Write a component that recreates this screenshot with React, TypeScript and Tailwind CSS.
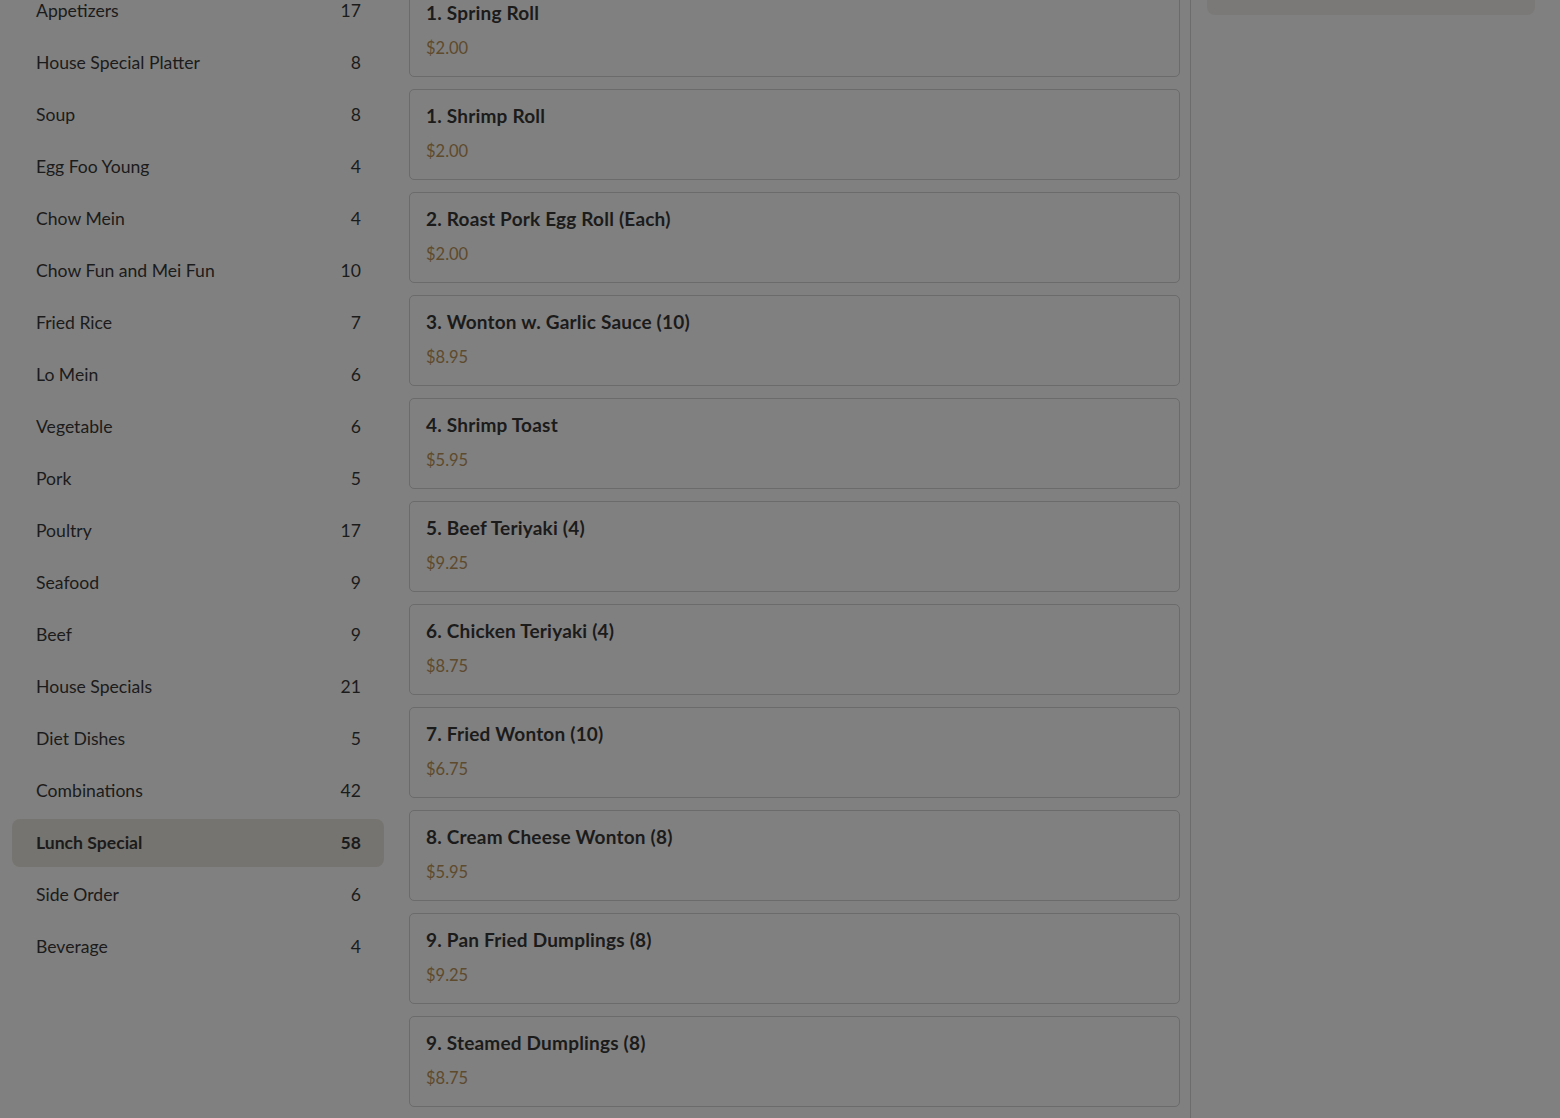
import React from 'react';

const categories: [string, number][] = [
  ['Appetizers', 17],
  ['House Special Platter', 8],
  ['Soup', 8],
  ['Egg Foo Young', 4],
  ['Chow Mein', 4],
  ['Chow Fun and Mei Fun', 10],
  ['Fried Rice', 7],
  ['Lo Mein', 6],
  ['Vegetable', 6],
  ['Pork', 5],
  ['Poultry', 17],
  ['Seafood', 9],
  ['Beef', 9],
  ['House Specials', 21],
  ['Diet Dishes', 5],
  ['Combinations', 42],
  ['Lunch Special', 58],
  ['Side Order', 6],
  ['Beverage', 4],
];

const items: [string, string][] = [
  ['1. Spring Roll', '$2.00'],
  ['1. Shrimp Roll', '$2.00'],
  ['2. Roast Pork Egg Roll (Each)', '$2.00'],
  ['3. Wonton w. Garlic Sauce (10)', '$8.95'],
  ['4. Shrimp Toast', '$5.95'],
  ['5. Beef Teriyaki (4)', '$9.25'],
  ['6. Chicken Teriyaki (4)', '$8.75'],
  ['7. Fried Wonton (10)', '$6.75'],
  ['8. Cream Cheese Wonton (8)', '$5.95'],
  ['9. Pan Fried Dumplings (8)', '$9.25'],
  ['9. Steamed Dumplings (8)', '$8.75'],
];

export default function App() {
  return (
    <div
      className="h-[1118px] overflow-hidden bg-[#808080] text-[#1b1b1b]"
      style={{ fontFamily: 'Lato, "Noto Sans", sans-serif' }}
    >
      <div className="flex items-start">
        {/* category sidebar */}
        <aside className="w-[396px] shrink-0 px-3 flex flex-col gap-1 -mt-[13px]">
          {categories.map(([name, count]) => {
            const active = name === 'Lunch Special';
            return (
              <div
                key={name}
                className={
                  active
                    ? 'h-12 flex items-center justify-between rounded-lg bg-[#767470] pl-6 pr-[23px] text-[17.6px] font-bold'
                    : 'h-12 flex items-center justify-between rounded-lg pl-6 pr-[23px] text-[17.6px]'
                }
              >
                <span>{name}</span>
                <span>{count}</span>
              </div>
            );
          })}
        </aside>

        {/* menu items */}
        <main className="w-[795px] shrink-0 self-stretch pl-[13px] pr-[10px] border-r border-[#6c6c6c] flex flex-col gap-3 pb-4 -mt-[14px]">
          {items.map(([title, price]) => (
            <div
              key={title}
              className="h-[91px] rounded-[5px] border border-[#6b6b6b] px-4 pt-[14px]"
            >
              <div className="text-[19px] leading-6 font-bold tracking-[0.2px]">{title}</div>
              <div className="mt-[11px] text-[16.5px] leading-6 text-[#5e4a2c]">{price}</div>
            </div>
          ))}
        </main>

        {/* cart panel */}
        <section className="flex-1 pl-4 pr-[25px]">
          <div className="h-[15px] rounded-b-lg bg-[#7a7977]" />
        </section>
      </div>
    </div>
  );
}
